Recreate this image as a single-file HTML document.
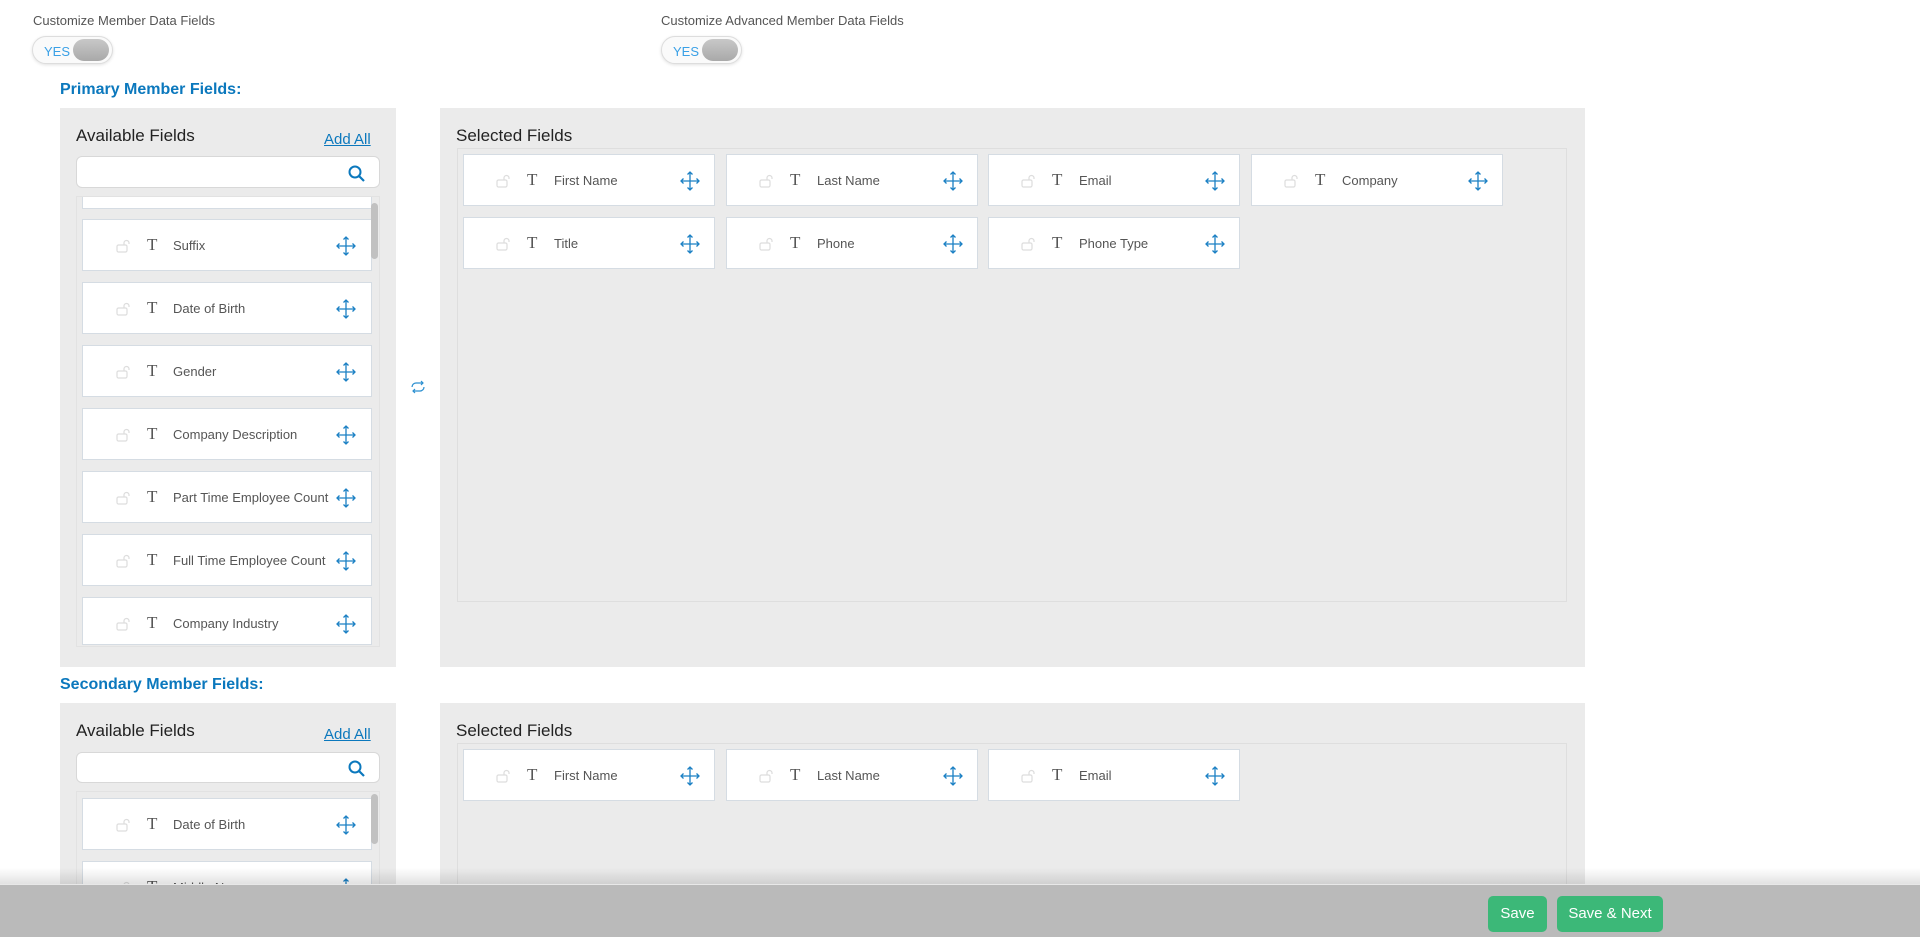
<!DOCTYPE html>
<html><head><meta charset="utf-8"><style>
*{box-sizing:border-box;margin:0;padding:0}
html,body{width:1920px;height:937px;overflow:hidden}
body{background:#fff;font-family:"Liberation Sans",Arial,sans-serif;position:relative;color:#555}
.abs{position:absolute}
.lbl{font-size:13px;color:#555}
.tog{position:absolute;width:81px;height:28px;border:1px solid #ddd;border-radius:14px;background:#fafafa;box-shadow:0 1px 3px rgba(0,0,0,.12)}
.tog span{position:absolute;left:11px;top:7px;font-size:13px;color:#3aa0e6}
.tog i{position:absolute;right:3px;top:2px;width:36px;height:22px;border-radius:11px;background:linear-gradient(#c8c8c8,#a9a9a9)}
.h{font-size:16px;font-weight:bold;color:#0b78bd}
.panel{position:absolute;background:#ebebeb;overflow:hidden}
.t17{font-size:17px;color:#222}
.addall{font-size:15px;color:#0b78bd;text-decoration:underline}
.search{position:absolute;background:#fff;border:1px solid #d8d8d8;border-radius:6px}
.list{position:absolute;overflow:hidden;border:1px solid #e2e2e2;background:#ebebeb}
.item{position:absolute;background:#fff;border:1px solid #d5dce3;height:52px}
.item .lk{position:absolute;top:19px}
.item .T{position:absolute;top:15px;font-family:"Liberation Serif",serif;font-size:17px;color:#555}
.item .tx{position:absolute;top:18px;font-size:13px;color:#555}
.item .mv{position:absolute;top:15px}
.sb{position:absolute;width:7px;border-radius:4px;background:#c1c1c1}
.inner{position:absolute;border:1px solid #dedede}
.btn{position:absolute;top:896px;height:36px;border-radius:5px;background:#3cb878;color:#fff;font-size:15px;text-align:center;line-height:36px;z-index:5}
</style></head><body>
<svg width="0" height="0" style="position:absolute;left:0;top:0"><defs>
<symbol id="lock" viewBox="0 0 16 14"><rect x="1" y="6" width="10" height="7" rx="1.5" fill="none" stroke="#ddd" stroke-width="1.2"/><path d="M8 6V4a2.5 2.5 0 0 1 5 0v1" fill="none" stroke="#ddd" stroke-width="1.2"/></symbol>
<symbol id="move" viewBox="0 0 22 22"><path d="M11 2v18M2 11h18M8.5 4.5L11 2l2.5 2.5M8.5 17.5L11 20l2.5-2.5M4.5 8.5L2 11l2.5 2.5M17.5 8.5L20 11l-2.5 2.5" fill="none" stroke="#1b80c4" stroke-width="1.3"/></symbol>
</defs></svg>

<div class="abs lbl" style="left:33px;top:13px">Customize Member Data Fields</div>
<div class="tog" style="left:32px;top:36px"><span>YES</span><i></i></div>
<div class="abs lbl" style="left:661px;top:13px">Customize Advanced Member Data Fields</div>
<div class="tog" style="left:661px;top:36px"><span>YES</span><i></i></div>

<div class="abs h" style="left:60px;top:81px">Primary Member Fields:</div>
<div class="panel" style="left:60px;top:108px;width:336px;height:559px">
<div class="abs t17" style="left:16px;top:18px">Available Fields</div>
<div class="abs addall" style="left:264px;top:23px">Add All</div>
<div class="search" style="left:16px;top:48px;width:304px;height:32px"><svg class="abs" style="right:14px;top:8px" width="17" height="17" viewBox="0 0 17 17"><circle cx="7" cy="7" r="5.5" fill="none" stroke="#0b78bd" stroke-width="2"/><path d="M11 11l5 5" stroke="#0b78bd" stroke-width="2.2"/></svg></div>
<div class="list" style="left:16px;top:88px;width:304px;height:451px">
<div class="item" style="left:5px;top:-40px;width:290px"></div>
<div class="item" style="left:5px;top:22px;width:290px"><svg class="lk" style="left:33px" width="16" height="14"><use href="#lock"/></svg><span class="T" style="left:64px">T</span><span class="tx" style="left:90px">Suffix</span><svg class="mv" style="left:252px" width="22" height="22"><use href="#move"/></svg></div>
<div class="item" style="left:5px;top:85px;width:290px"><svg class="lk" style="left:33px" width="16" height="14"><use href="#lock"/></svg><span class="T" style="left:64px">T</span><span class="tx" style="left:90px">Date of Birth</span><svg class="mv" style="left:252px" width="22" height="22"><use href="#move"/></svg></div>
<div class="item" style="left:5px;top:148px;width:290px"><svg class="lk" style="left:33px" width="16" height="14"><use href="#lock"/></svg><span class="T" style="left:64px">T</span><span class="tx" style="left:90px">Gender</span><svg class="mv" style="left:252px" width="22" height="22"><use href="#move"/></svg></div>
<div class="item" style="left:5px;top:211px;width:290px"><svg class="lk" style="left:33px" width="16" height="14"><use href="#lock"/></svg><span class="T" style="left:64px">T</span><span class="tx" style="left:90px">Company Description</span><svg class="mv" style="left:252px" width="22" height="22"><use href="#move"/></svg></div>
<div class="item" style="left:5px;top:274px;width:290px"><svg class="lk" style="left:33px" width="16" height="14"><use href="#lock"/></svg><span class="T" style="left:64px">T</span><span class="tx" style="left:90px">Part Time Employee Count</span><svg class="mv" style="left:252px" width="22" height="22"><use href="#move"/></svg></div>
<div class="item" style="left:5px;top:337px;width:290px"><svg class="lk" style="left:33px" width="16" height="14"><use href="#lock"/></svg><span class="T" style="left:64px">T</span><span class="tx" style="left:90px">Full Time Employee Count</span><svg class="mv" style="left:252px" width="22" height="22"><use href="#move"/></svg></div>
<div class="item" style="left:5px;top:400px;width:290px;height:48px"><svg class="lk" style="left:33px" width="16" height="14"><use href="#lock"/></svg><span class="T" style="left:64px">T</span><span class="tx" style="left:90px">Company Industry</span><svg class="mv" style="left:252px" width="22" height="22"><use href="#move"/></svg></div>
<div class="sb" style="left:294px;top:6px;height:56px"></div>
</div>
</div>

<svg class="abs" style="left:410px;top:380px" width="16" height="14" viewBox="0 0 16 14"><path d="M2 7a4 4 0 0 1 4-4h7M11 1l2 2-2 2M14 7a4 4 0 0 1-4 4H3M5 9l-2 2 2 2" fill="none" stroke="#2a8fd0" stroke-width="1.2"/></svg>

<div class="panel" style="left:440px;top:108px;width:1145px;height:559px">
<div class="abs t17" style="left:16px;top:18px">Selected Fields</div>
<div class="inner" style="left:17px;top:40px;width:1110px;height:454px"></div>
<div class="item" style="left:23px;top:46px;width:252px"><svg class="lk" style="left:32px" width="16" height="14"><use href="#lock"/></svg><span class="T" style="left:63px">T</span><span class="tx" style="left:90px">First Name</span><svg class="mv" style="left:215px" width="22" height="22"><use href="#move"/></svg></div>
<div class="item" style="left:286px;top:46px;width:252px"><svg class="lk" style="left:32px" width="16" height="14"><use href="#lock"/></svg><span class="T" style="left:63px">T</span><span class="tx" style="left:90px">Last Name</span><svg class="mv" style="left:215px" width="22" height="22"><use href="#move"/></svg></div>
<div class="item" style="left:548px;top:46px;width:252px"><svg class="lk" style="left:32px" width="16" height="14"><use href="#lock"/></svg><span class="T" style="left:63px">T</span><span class="tx" style="left:90px">Email</span><svg class="mv" style="left:215px" width="22" height="22"><use href="#move"/></svg></div>
<div class="item" style="left:811px;top:46px;width:252px"><svg class="lk" style="left:32px" width="16" height="14"><use href="#lock"/></svg><span class="T" style="left:63px">T</span><span class="tx" style="left:90px">Company</span><svg class="mv" style="left:215px" width="22" height="22"><use href="#move"/></svg></div>
<div class="item" style="left:23px;top:109px;width:252px"><svg class="lk" style="left:32px" width="16" height="14"><use href="#lock"/></svg><span class="T" style="left:63px">T</span><span class="tx" style="left:90px">Title</span><svg class="mv" style="left:215px" width="22" height="22"><use href="#move"/></svg></div>
<div class="item" style="left:286px;top:109px;width:252px"><svg class="lk" style="left:32px" width="16" height="14"><use href="#lock"/></svg><span class="T" style="left:63px">T</span><span class="tx" style="left:90px">Phone</span><svg class="mv" style="left:215px" width="22" height="22"><use href="#move"/></svg></div>
<div class="item" style="left:548px;top:109px;width:252px"><svg class="lk" style="left:32px" width="16" height="14"><use href="#lock"/></svg><span class="T" style="left:63px">T</span><span class="tx" style="left:90px">Phone Type</span><svg class="mv" style="left:215px" width="22" height="22"><use href="#move"/></svg></div>
</div>

<div class="abs h" style="left:60px;top:676px">Secondary Member Fields:</div>
<div class="panel" style="left:60px;top:703px;width:336px;height:182px">
<div class="abs t17" style="left:16px;top:18px">Available Fields</div>
<div class="abs addall" style="left:264px;top:23px">Add All</div>
<div class="search" style="left:16px;top:49px;width:304px;height:31px"><svg class="abs" style="right:14px;top:7px" width="17" height="17" viewBox="0 0 17 17"><circle cx="7" cy="7" r="5.5" fill="none" stroke="#0b78bd" stroke-width="2"/><path d="M11 11l5 5" stroke="#0b78bd" stroke-width="2.2"/></svg></div>
<div class="list" style="left:16px;top:88px;width:304px;height:94px">
<div class="item" style="left:5px;top:6px;width:290px"><svg class="lk" style="left:33px" width="16" height="14"><use href="#lock"/></svg><span class="T" style="left:64px">T</span><span class="tx" style="left:90px">Date of Birth</span><svg class="mv" style="left:252px" width="22" height="22"><use href="#move"/></svg></div>
<div class="item" style="left:5px;top:69px;width:290px;height:24px;overflow:hidden"><svg class="lk" style="left:33px" width="16" height="14"><use href="#lock"/></svg><span class="T" style="left:64px">T</span><span class="tx" style="left:90px">Middle Name</span><svg class="mv" style="left:252px" width="22" height="22"><use href="#move"/></svg></div>
<div class="sb" style="left:294px;top:2px;height:50px"></div>
</div>
</div>
<div class="panel" style="left:440px;top:703px;width:1145px;height:182px">
<div class="abs t17" style="left:16px;top:18px">Selected Fields</div>
<div class="inner" style="left:17px;top:40px;width:1110px;height:142px;border-bottom:0"></div>
<div class="item" style="left:23px;top:46px;width:252px"><svg class="lk" style="left:32px" width="16" height="14"><use href="#lock"/></svg><span class="T" style="left:63px">T</span><span class="tx" style="left:90px">First Name</span><svg class="mv" style="left:215px" width="22" height="22"><use href="#move"/></svg></div>
<div class="item" style="left:286px;top:46px;width:252px"><svg class="lk" style="left:32px" width="16" height="14"><use href="#lock"/></svg><span class="T" style="left:63px">T</span><span class="tx" style="left:90px">Last Name</span><svg class="mv" style="left:215px" width="22" height="22"><use href="#move"/></svg></div>
<div class="item" style="left:548px;top:46px;width:252px"><svg class="lk" style="left:32px" width="16" height="14"><use href="#lock"/></svg><span class="T" style="left:63px">T</span><span class="tx" style="left:90px">Email</span><svg class="mv" style="left:215px" width="22" height="22"><use href="#move"/></svg></div>
</div>

<div class="abs" style="left:0;top:868px;width:1920px;height:17px;background:linear-gradient(rgba(0,0,0,0),rgba(0,0,0,.12));z-index:4"></div>
<div class="abs" style="left:0;top:884px;width:1920px;height:53px;background:#bababa;border-top:1px solid #e8e8e8;z-index:4"></div>
<div class="btn" style="left:1488px;width:59px">Save</div>
<div class="btn" style="left:1557px;width:106px">Save &amp; Next</div>
</body></html>
